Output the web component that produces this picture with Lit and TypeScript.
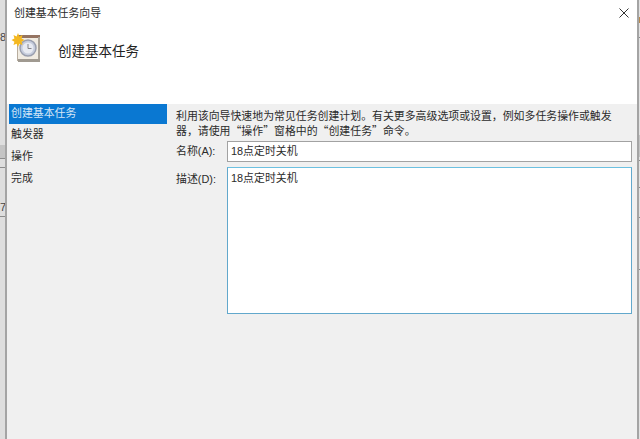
import { LitElement, html, css } from "lit";
import { customElement } from "lit/decorators.js";

@customElement("app-root")
export class AppRoot extends LitElement {
  static styles = css`
    :host { display: block; width: 640px; height: 439px; overflow: hidden; background: #e4e4e4; }
    * { box-sizing: border-box; }
    .shell { display: grid; grid-template-columns: 7px 1fr 3px; width: 640px; height: 439px; font-family: "Liberation Sans", "Noto Sans CJK SC", sans-serif; color: #2b2b2b; }
    .edge { display: flex; flex-direction: column; height: 439px; overflow: hidden; background: #dedede; border-right: 2px solid #a4a4a4; font-size: 11px; color: #444; }
    .edge.right { border-right: 0; border-left: 2px solid #a4a4a4; background: #e2e2e2; }
    .edge .sp { flex: none; }
    .edge .band { flex: none; background: #c4c4c4; }
    .edge .line { flex: none; height: 1px; background: #8c8c8c; }
    .edge .mark { flex: none; line-height: 14px; height: 14px; width: 5px; overflow: hidden; white-space: nowrap; }
    .edge .orange { flex: none; height: 6px; background: #b98a4e; }
    .h2 { height: 2px; } .h3 { height: 3px; } .h8 { height: 8px; } .h14 { height: 14px; } .h17 { height: 17px; }
    .h26 { height: 26px; } .h29 { height: 29px; } .h30 { height: 30px; } .h32 { height: 32px; } .h51 { height: 51px; }
    .h97 { height: 97px; } .h101 { height: 101px; }
    .b13 { height: 13px; }
    .b22 { height: 22px; }
    .win { display: flex; flex-direction: column; min-width: 0; background: #f0f0f0; }
    .top { height: 104px; background: #fff; display: flex; flex-direction: column; }
    .titlebar { height: 26px; padding: 6px 0 0 7px; display: flex; justify-content: space-between; font-size: 10.9px; line-height: 15px; }
    .close { width: 10px; height: 10px; margin: 2px 8px 0 0; }
    .head { display: flex; align-items: flex-start; }
    .icon { width: 30px; height: 30px; margin: 7px 0 0 4px; }
    .h1 { font-size: 13.5px; line-height: 18px; margin: 17px 0 0 17px; color: #222; }
    .body { flex: 1; display: grid; grid-template-columns: 160px 1fr; }
    .nav { display: flex; flex-direction: column; font-size: 10.9px; padding-left: 2px; }
    .nav div { height: 22px; line-height: 18px; padding-left: 2px; }
    .nav .on { height: 20px; background: #0a78d2; color: #d5e6f6; margin-bottom: 1px; }
    .form { padding: 4px 5px 0 9px; font-size: 10.9px; }
    .intro { line-height: 15px; height: 33px; font-family: "Noto Sans CJK SC", sans-serif; }
    .row { display: grid; grid-template-columns: 51px 1fr; margin-bottom: 5px; }
    .row label { line-height: 21px; }
    .row label.tall { line-height: 25px; height: 25px; }
    .input { height: 21px; background: #fff; border: 1px solid #a2a2a2; padding-left: 3px; line-height: 19px; }
    .area { height: 147px; background: #fff; border: 1px solid #62a8cc; border-top-color: #6cc0e0; padding: 3px 3px; line-height: 15px; }
  `;

  render() {
    return html`<div class="shell" lang="zh-CN">
      <div class="edge">
        <div class="sp h30"></div><div class="mark">8</div>
        <div class="sp h101"></div>
        <div class="band b13"></div><div class="line"></div>
        <div class="sp h8"></div><div class="line"></div>
        <div class="sp h32"></div><div class="mark">7(</div>
        <div class="sp h2"></div><div class="line"></div>
      </div>
      <div class="win">
        <div class="top">
          <div class="titlebar">
            <span>创建基本任务向导</span>
            <svg class="close" viewBox="0 0 10 10"><path d="M.5.5l9 9M9.500.5l-9 9" stroke="#333" stroke-width="1" fill="none"/></svg>
          </div>
          <div class="head">
            <svg class="icon" viewBox="0 0 30 30">
              <rect x="6.500" y="2.500" width="22" height="25" fill="#f1ece2" stroke="#b8ad9e"/>
              <rect x="6" y="2" width="23" height="3" fill="#957462"/>
              <rect x="27" y="4" width="2" height="25" fill="#aaa398"/>
              <rect x="7" y="26" width="22" height="3" fill="#a09a91"/>
              <circle cx="17" cy="15" r="8" fill="#c6cddd" stroke="#9a9fae" stroke-width="1.500"/>
              <circle cx="17" cy="15" r="5.500" fill="#e8ebf2"/>
              <path d="M17 11v4.500h3.500" stroke="#85858a" stroke-width="1" fill="none"/>
              <path d="M7 0l1.400 3.400L11.500 2 10.600 5.500 13.500 7 10.600 8.700 11.500 12 8.300 10.700 7 14 5.600 10.700 2.500 12 3.400 8.700 .500 7 3.400 5.500 2.500 2 5.600 3.400z" fill="#f4b821"/>
            </svg>
            <div class="h1">创建基本任务</div>
          </div>
        </div>
        <div class="body">
          <div class="nav">
            <div class="on">创建基本任务</div>
            <div>触发器</div>
            <div>操作</div>
            <div>完成</div>
          </div>
          <div class="form">
            <div class="intro">利用该向导快速地为常见任务创建计划。有关更多高级选项或设置，例如多任务操作或触发器，请使用“操作”窗格中的“创建任务”命令。</div>
            <div class="row"><label>名称(A):</label><div class="input">18点定时关机</div></div>
            <div class="row"><label class="tall">描述(D):</label><div class="area">18点定时关机</div></div>
          </div>
        </div>
      </div>
      <div class="edge right">
        <div class="sp h17"></div><div class="orange"></div>
        <div class="sp h14"></div><div class="line"></div>
        <div class="sp h97"></div>
        <div class="band b22"></div><div class="sp h3"></div><div class="line"></div>
        <div class="sp h26"></div><div class="line"></div>
        <div class="sp h29"></div><div class="line"></div>
        <div class="sp h51"></div><div class="line"></div>
      </div>
    </div>`;
  }
}
